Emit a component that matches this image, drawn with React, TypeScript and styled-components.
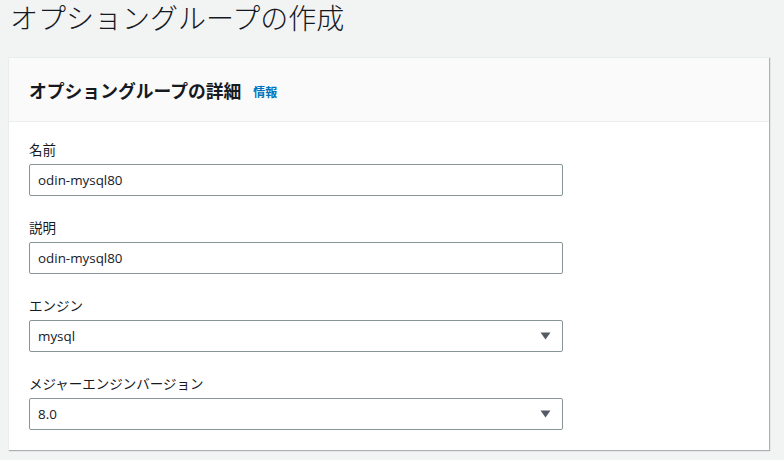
import React from "react";
import styled, { createGlobalStyle } from "styled-components";

const Global = createGlobalStyle`
  html, body { margin: 0; padding: 0; background: #f2f3f3; }
  body { font-family: "Open Sans", "Noto Sans", "Noto Sans CJK JP", sans-serif; color: #16191f; }
`;

const Page = styled.div`
  width: 784px;
  height: 460px;
  padding: 0 15px 0 8px;
  box-sizing: border-box;
  display: flex;
  flex-direction: column;
  overflow: hidden;
`;

const Title = styled.h1`
  margin: 0 0 0 2px;
  padding-top: 1px;
  height: 56px;
  font-family: "Noto Sans CJK JP", sans-serif;
  font-weight: 300;
  font-size: 28px;
  line-height: 32px;
  color: #16191f;
  white-space: nowrap;
`;

const Card = styled.section`
  background: #fff;
  border-top: 1px solid #eaeded;
  border-left: 1px solid #eaeded;
  box-shadow: 1px 1px 1px 0 rgba(0, 28, 36, 0.3);
  width: 761px;
  height: 393px;
  box-sizing: border-box;
  display: flex;
  flex-direction: column;
`;

const CardHeader = styled.header`
  background: #fafafa;
  border-bottom: 1px solid #eaeded;
  height: 64px;
  box-sizing: border-box;
  display: flex;
  align-items: center;
  padding: 0 20px;
  gap: 12px;
`;

const HeaderTitle = styled.h2`
  margin: 0;
  font-family: "Noto Sans CJK JP", sans-serif;
  font-weight: 700;
  font-size: 17.8px;
  line-height: 22px;
  color: #16191f;
`;

const InfoLink = styled.a`
  font-family: "Noto Sans CJK JP", sans-serif;
  font-weight: 700;
  font-size: 12px;
  color: #0073bb;
  text-decoration: none;
  margin-top: 3px;
`;

const CardBody = styled.div`
  padding: 16px 20px 20px 20px;
  display: flex;
  flex-direction: column;
  gap: 20px;
`;

const Field = styled.div`
  display: flex;
  flex-direction: column;
  gap: 4px;
`;

const Label = styled.label`
  font-family: "Noto Sans CJK JP", sans-serif;
  font-size: 13.5px;
  line-height: 22px;
  color: #16191f;
`;

const Box = styled.div<{ $select?: boolean }>`
  width: 534px;
  height: 32px;
  box-sizing: border-box;
  border: 1px solid #879596;
  border-radius: 2px;
  background: #fff;
  display: flex;
  align-items: center;
  justify-content: space-between;
  padding: 0 11px 0 8px;
  font-family: "Open Sans", "Noto Sans", sans-serif;
  font-size: 13.4px;
  color: #16191f;
`;

const Arrow = () => (
  <svg width="11" height="8" viewBox="0 0 11 8">
    <path d="M0.5 0.5 H10.5 L5.5 7.5 Z" fill="#545b64" />
  </svg>
);

const fields: { label: string; value: string; select?: boolean }[] = [
  { label: "名前", value: "odin-mysql80" },
  { label: "説明", value: "odin-mysql80" },
  { label: "エンジン", value: "mysql", select: true },
  { label: "メジャーエンジンバージョン", value: "8.0", select: true },
];

export default function App() {
  return (
    <>
      <Global />
      <Page>
        <Title>オプショングループの作成</Title>
        <Card>
          <CardHeader>
            <HeaderTitle>オプショングループの詳細</HeaderTitle>
            <InfoLink href="#">情報</InfoLink>
          </CardHeader>
          <CardBody>
            {fields.map((f) => (
              <Field key={f.label}>
                <Label>{f.label}</Label>
                <Box $select={f.select}>
                  <span>{f.value}</span>
                  {f.select && <Arrow />}
                </Box>
              </Field>
            ))}
          </CardBody>
        </Card>
      </Page>
    </>
  );
}
